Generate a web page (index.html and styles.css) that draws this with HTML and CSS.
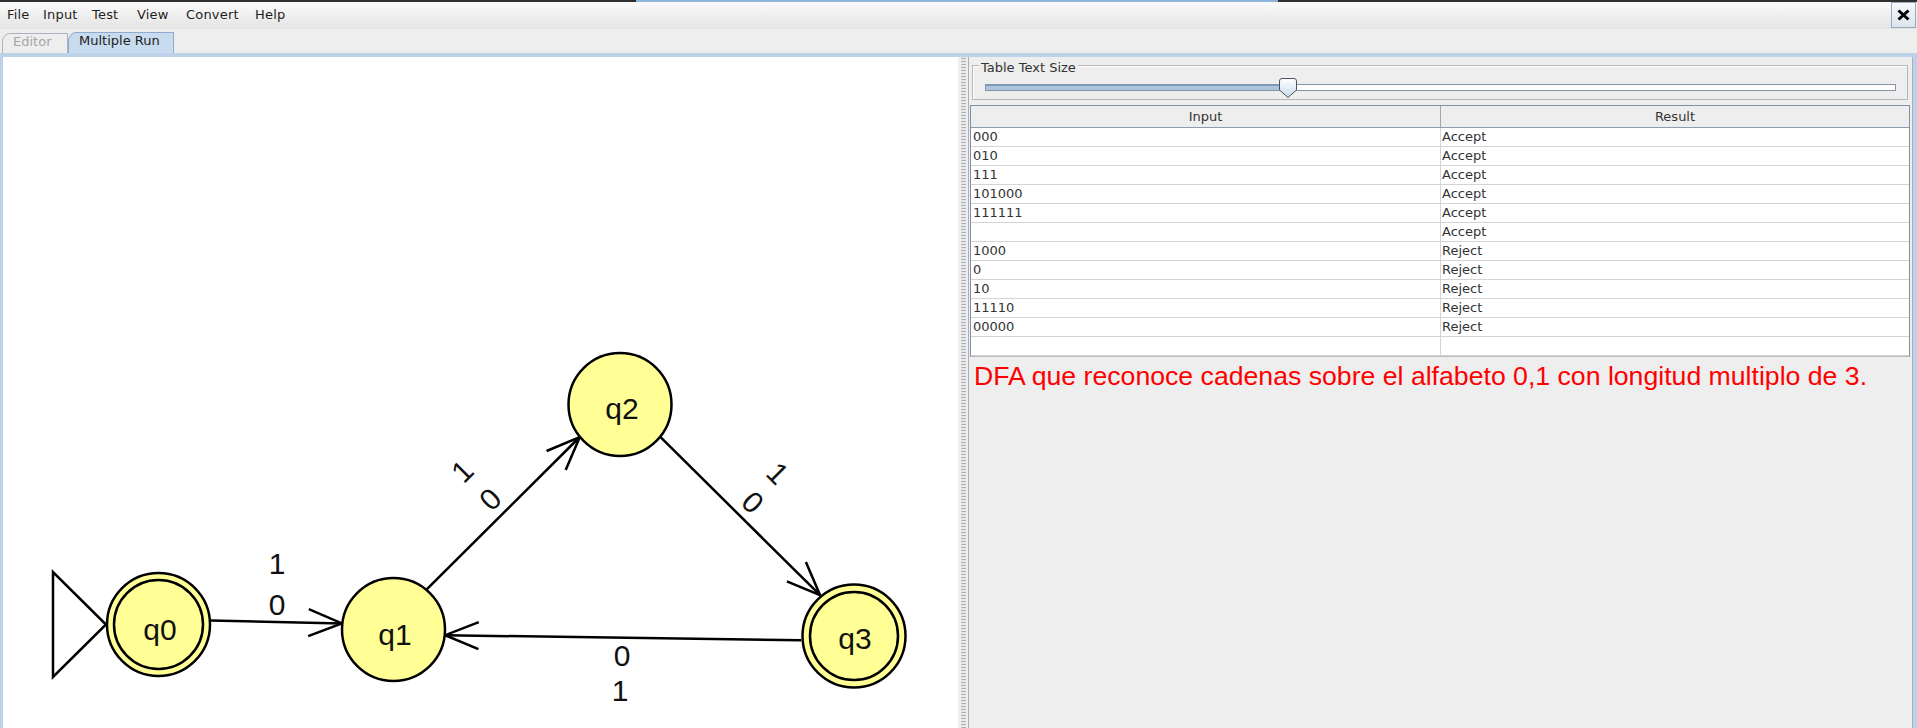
FILE: index.html
```html
<!DOCTYPE html>
<html>
<head>
<meta charset="utf-8">
<title>JFLAP - Multiple Run</title>
<link rel="stylesheet" href="styles.css">
</head>
<body>
<div class="window">
  <div class="topline"></div>
  <div class="menubar">
    <div class="menus">
      <span class="menu">File</span>
      <span class="menu">Input</span>
      <span class="menu">Test</span>
      <span class="menu">View</span>
      <span class="menu">Convert</span>
      <span class="menu">Help</span>
    </div>
    <div class="close"><svg width="13" height="12" viewBox="0 0 13 12"><path class="close-x" d="M1.5 1.5 L11.5 10.5 M11.5 1.5 L1.5 10.5"/></svg></div>
  </div>
  <div class="tabrow">
    <div class="tab tab-off">Editor</div>
    <div class="tab tab-on">Multiple Run</div>
  </div>
  <div class="content">
    <div class="canvas">
      <svg class="diagram" width="955" height="671" viewBox="3 57 955 671">
        <polygon class="edge" points="53,572 53,677 106,624.5"/>
        <line class="edge" x1="210.9" y1="620.6" x2="341.9" y2="623.4"/>
        <polyline class="edge" points="308.8,609.2 341.9,623.4 308.2,636.2"/>
        <line class="edge" x1="426.7" y1="589.4" x2="579.8" y2="437.0"/>
        <polyline class="edge" points="546.6,451.0 579.8,437.0 565.7,470.1"/>
        <line class="edge" x1="660.3" y1="436.9" x2="820.1" y2="595.2"/>
        <polyline class="edge" points="805.9,562.1 820.1,595.2 786.9,581.3"/>
        <line class="edge" x1="801.2" y1="640.3" x2="445.2" y2="635.2"/>
        <polyline class="edge" points="478.4,649.2 445.2,635.2 478.8,622.2"/>

        <circle class="state" cx="158.5" cy="624.5" r="51.5"/>
        <circle class="ring" cx="158.5" cy="624.5" r="44.5"/>
        <circle class="state" cx="393.5" cy="629.5" r="51.5"/>
        <circle class="state" cx="620" cy="404.5" r="51.5"/>
        <circle class="state" cx="854" cy="636" r="51.5"/>
        <circle class="ring" cx="854" cy="636" r="44"/>

        <text class="lbl" x="160" y="639.5">q0</text>
        <text class="lbl" x="395" y="644.5">q1</text>
        <text class="lbl" x="622" y="418.5">q2</text>
        <text class="lbl" x="855" y="649">q3</text>

        <text class="lbl" x="277" y="574">1</text>
        <text class="lbl" x="277" y="614.5">0</text>
        <text class="lbl" x="622" y="666">0</text>
        <text class="lbl" x="620" y="701">1</text>
        <text class="lbl" transform="translate(462 471) rotate(-45)" y="10.7">1</text>
        <text class="lbl" transform="translate(490 499) rotate(-45)" y="10.7">0</text>
        <text class="lbl" transform="translate(778 473) rotate(45)" y="10.7">1</text>
        <text class="lbl" transform="translate(753 502) rotate(45)" y="10.7">0</text>
      </svg>
    </div>
    <div class="divider"><div class="grip"></div></div>
    <div class="side">
      <div class="group">
        <div class="legend">Table Text Size</div>
        <div class="slider">
          <div class="track"><div class="fill"></div></div>
          <svg class="thumb" width="18" height="20" viewBox="0 0 18 20">
            <defs>
              <linearGradient id="tg" x1="0" y1="0" x2="0" y2="1">
                <stop offset="0" stop-color="#ffffff"/>
                <stop offset="1" stop-color="#c9d9ea"/>
              </linearGradient>
            </defs>
            <path class="thumb-shape" d="M3 0.5 H15 Q17.5 0.5 17.5 3 V12 L9 19.5 L0.5 12 V3 Q0.5 0.5 3 0.5 Z"/>
          </svg>
        </div>
      </div>
      <div class="table">
        <div class="hrow"><div class="hcell">Input</div><div class="hcell">Result</div></div>
        <div class="row"><div class="cell">000</div><div class="cell">Accept</div></div>
        <div class="row"><div class="cell">010</div><div class="cell">Accept</div></div>
        <div class="row"><div class="cell">111</div><div class="cell">Accept</div></div>
        <div class="row"><div class="cell">101000</div><div class="cell">Accept</div></div>
        <div class="row"><div class="cell">111111</div><div class="cell">Accept</div></div>
        <div class="row"><div class="cell"></div><div class="cell">Accept</div></div>
        <div class="row"><div class="cell">1000</div><div class="cell">Reject</div></div>
        <div class="row"><div class="cell">0</div><div class="cell">Reject</div></div>
        <div class="row"><div class="cell">10</div><div class="cell">Reject</div></div>
        <div class="row"><div class="cell">11110</div><div class="cell">Reject</div></div>
        <div class="row"><div class="cell">00000</div><div class="cell">Reject</div></div>
        <div class="row"><div class="cell"></div><div class="cell"></div></div>
      </div>
      <div class="note">DFA que reconoce cadenas sobre el alfabeto 0,1 con longitud multiplo de 3.</div>
    </div>
  </div>
</div>
</body>
</html>
```

FILE: styles.css
```css
* { box-sizing: border-box; }
html, body { margin: 0; padding: 0; }
body {
  width: 1917px;
  height: 728px;
  overflow: hidden;
  background: #eeeeee;
  font-family: "DejaVu Sans", "Liberation Sans", sans-serif;
  font-size: 13px;
  color: #222;
}
.window { display: flex; flex-direction: column; height: 728px; }

.topline {
  height: 2px;
  background: linear-gradient(to right, #2f2f2f 0, #2f2f2f 636px, #8fb4dc 636px, #8fb4dc 1278px, #2f2f2f 1278px);
}

.menubar {
  height: 27px;
  display: flex;
  align-items: center;
  padding-left: 7px;
  background: linear-gradient(#fafafa, #e4e4e4);
}
.menus {
  display: grid;
  grid-template-columns: 36px 49px 45px 49px 69px 40px;
}
.menu { line-height: 16px; color: #1e1e1e; margin-top: -2px; letter-spacing: 0.2px; white-space: nowrap; }
.close {
  margin-left: auto;
  margin-right: 1px;
  align-self: flex-start;
  width: 25px;
  height: 26px;
  border: 1px solid #97a9c0;
  background: linear-gradient(#f6f9fc, #dbe4ee);
  display: flex;
  align-items: center;
  justify-content: center;
}
.close-x { stroke: #000; stroke-width: 3; fill: none; }

.tabrow {
  height: 24px;
  display: flex;
  align-items: flex-end;
  padding-left: 2px;
  background: #eeeeee;
}
.tab {
  border: 1px solid #a9b2be;
  border-bottom: none;
  border-top-left-radius: 8px 9px;
  line-height: 15px;
  padding-left: 10px;
  white-space: nowrap;
}
.tab-off { width: 66px; height: 20px; color: #a6a6a6; background: #eeeeee; }
.tab-on { width: 106px; height: 21px; color: #222; background: #c8dbef; border-color: #8eaacf; }

.content {
  flex: 1;
  display: flex;
  border-top: 4px solid #bdd1e8;
  border-left: 3px solid #bdd1e8;
  border-right: 4px solid #bdd1e8;
  min-height: 0;
}
.canvas { width: 955px; background: #ffffff; overflow: hidden; }
.diagram { display: block; }
.edge { fill: none; stroke: #000; stroke-width: 2.5; stroke-linejoin: miter; }
polygon.edge { fill: #ffffff; }
.state { fill: #ffff96; stroke: #000; stroke-width: 2.5; }
.ring { fill: none; stroke: #000; stroke-width: 2.5; }
.lbl { font-family: "Liberation Sans", Arial, sans-serif; font-size: 30px; fill: #111; text-anchor: middle; }

.divider { width: 10px; background: #eeeeee; display: flex; }
.grip {
  width: 5px;
  margin-left: 3px;
  background-image: radial-gradient(circle, #a2a2a2 0.7px, transparent 1.1px);
  background-size: 2.5px 3px;
}

.side {
  width: 945px;
  display: flex;
  flex-direction: column;
  border-left: 1px solid #a4b1c2;
  border-right: 1px solid #a4b1c2;
  background: #eeeeee;
}
.group {
  margin: 8px 4px 0 3px;
  height: 35px;
  border: 1px solid #b6b6b6;
  box-shadow: inset 1px 1px 0 #ffffff;
  display: flex;
  flex-direction: column;
}
.legend {
  align-self: flex-start;
  margin: -6px 0 0 6px;
  padding: 0 2px;
  line-height: 15px;
  background: #eeeeee;
  color: #333;
}
.slider {
  position: relative;
  height: 20px;
  margin: 3px 11px 0 12px;
}
.track {
  margin-top: 6px;
  height: 7px;
  border: 1px solid #8394a8;
  background: #ffffff;
}
.fill {
  width: 302px;
  height: 100%;
  background: #adc4de;
  border-top: 1px solid #7d9cc4;
}
.thumb { position: absolute; left: 294px; top: 0; }
.thumb-shape { fill: url(#tg); stroke: #4d5560; stroke-width: 1; }

.table {
  margin: 5px 2px 0 1px;
  border: 1px solid #8191a5;
  border-bottom: 1px solid #b9b9b9;
  background: #ffffff;
}
.hrow {
  display: grid;
  grid-template-columns: 470px 1fr;
  height: 22px;
  border-bottom: 1px solid #8e9bb0;
  background: #eeeeee;
}
.hcell {
  text-align: center;
  line-height: 21px;
  color: #333;
}
.hcell:first-child { border-right: 1px solid #9ea9b8; }
.row {
  display: grid;
  grid-template-columns: 470px 1fr;
  height: 19px;
  border-bottom: 1px solid #d4d4d4;
}
.cell {
  line-height: 18px;
  padding-left: 1px;
  color: #333;
  white-space: nowrap;
}
.cell:first-child { border-right: 1px solid #d4d4d4; padding-left: 2px; }

.note {
  margin-top: 4px;
  padding-left: 5px;
  line-height: 30px;
  font-family: "Liberation Sans", Arial, sans-serif;
  font-size: 26.65px;
  color: #ff0000;
  white-space: nowrap;
}
```
